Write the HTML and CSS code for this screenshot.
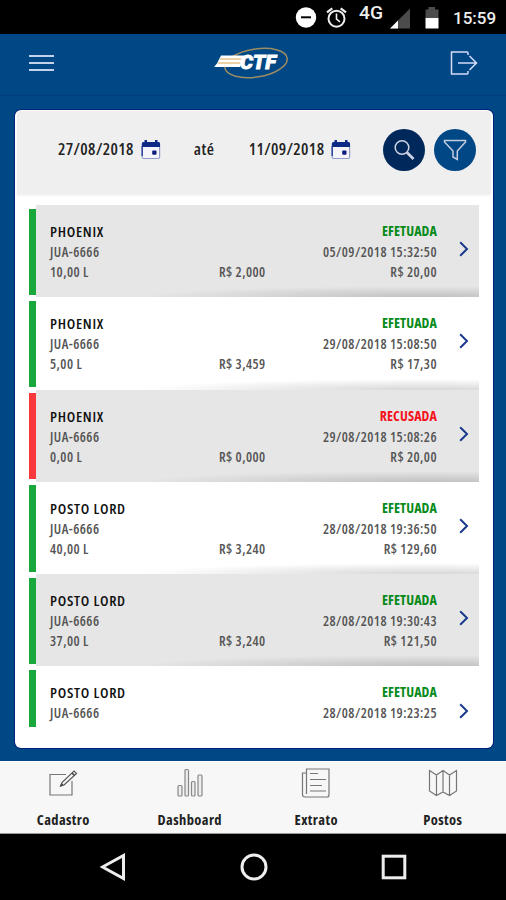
FILE: index.html
```html
<!DOCTYPE html>
<html lang="pt-BR">
<head>
	<meta charset="UTF-8">
	<meta name="viewport" content="width=device-width,user-scalable=no">
	<title>CTF</title>
	<link rel="stylesheet" href="styles.css">
</head>
<body>
	<svg class="defs" width="0" height="0">
		<symbol id="calendar" viewBox="0 0 20 20">
			<rect x="1.2" y="2.5" width="17.4" height="16" rx="1.5" fill="#f4f4fa" stroke="#8f9bc8" stroke-width="1.2"/>
			<path d="M1 7V3.5Q1 2 2.5 2H3.5V0H6V2H14V0H16.5V2H17.5Q19 2 19 3.5V7Z" fill="#0c2a86"/>
			<path d="M1.2 6V16" stroke="#22409a" stroke-width="1.4"/>
			<rect x="11.2" y="10.5" width="4.3" height="4.2" rx="1" fill="#0c1c7c"/>
		</symbol>
		<symbol id="arrow" viewBox="0 0 10 16">
			<path d="M1.2 1.2L8 8L1.2 14.8" fill="none" stroke="#1a3a8c" stroke-width="2"/>
		</symbol>
	</svg>

	<div class="status">
		<svg class="icons" width="142" height="34" viewBox="0 0 142 34">
			<circle cx="11" cy="17.5" r="10.2" fill="#fff"/>
			<path d="M6 17.3H16" stroke="#000" stroke-width="2"/>
			<g fill="none" stroke="#eee" stroke-width="2">
				<circle cx="41.5" cy="18.7" r="8"/>
				<path d="M41.5 13.5V19L45 21.8" stroke-width="1.6"/>
				<path d="M32 12.3L37.3 8.3M51 12.3L45.7 8.3" stroke-width="2.3"/>
			</g>
			<text class="net" x="64" y="18.5" textLength="24" lengthAdjust="spacingAndGlyphs">4G</text>
			<path d="M95 28.5L115 8.5V28.5Z" fill="#4c4c4c"/>
			<path d="M95 28.5L103 20.5V28.5Z" fill="#fff"/>
			<path d="M130.5 18V9.5H133.5V7H140V9.5H143.5V18Z" fill="#4c4c4c"/>
			<path d="M130.5 18H143.5V28.5H130.5Z" fill="#fff"/>
		</svg>
		<span class="clock">15:59</span>
	</div>

	<header class="top">
		<svg width="26" height="18" viewBox="0 0 26 18">
			<path d="M0 2H25M0 9H25M0 16H25" stroke="#c3d3ec" stroke-width="1.8"/>
		</svg>
		<svg class="logo" width="76" height="34" viewBox="0 0 76 34">
			<ellipse cx="42" cy="17" rx="31.5" ry="14" transform="rotate(-9 42 17)" fill="none" stroke="#9c8d62" stroke-width="1.5"/>
			<path d="M7 9.5H32L26 21H0L3 17.5Z" fill="#fff"/>
			<path d="M6 13H30M4 17H28" stroke="#d6a64a" stroke-width="1.2"/>
			<text class="brand" x="26" y="23" textLength="36" lengthAdjust="spacingAndGlyphs">CTF</text>
		</svg>
		<svg width="28" height="24" viewBox="0 0 28 24">
			<path d="M18 4V2Q18 1 17 1H1.5V23H17Q18 23 18 22V20M8 12H26M19.5 5L26.5 12L19.5 19" fill="none" stroke="#d5dcf6" stroke-width="1.5"/>
		</svg>
	</header>

	<main class="card">
		<div class="filter">
			<span class="date">27/08/2018</span>
			<svg class="cal" width="20" height="20"><use href="#calendar"/></svg>
			<span class="until">até</span>
			<span class="date">11/09/2018</span>
			<svg class="cal" width="20" height="20"><use href="#calendar"/></svg>
			<a class="btn search">
				<svg width="22" height="22" viewBox="0 0 22 22" fill="none" stroke="#cfd3e4">
					<circle cx="9" cy="8.5" r="6.8" stroke-width="1.5"/>
					<path d="M14 13.5L20.5 20" stroke-width="2.6"/>
				</svg>
			</a>
			<a class="btn">
				<svg width="24" height="22" viewBox="0 0 24 22">
					<path d="M1.5 1.5H22.5V3L14.3 12V20.5L10 18V12L1.5 3Z" fill="none" stroke="#c5cde0" stroke-width="1.5"/>
				</svg>
			</a>
		</div>

		<ul class="list">
			<li>
				<i class="bar"></i>
				<div class="row">
					<div class="left"><b>PHOENIX</b><span>JUA-6666</span><span>10,00 L</span></div>
					<span class="price">R$ 2,000</span>
					<div class="right"><b>EFETUADA</b><span>05/09/2018 15:32:50</span><span>R$ 20,00</span></div>
					<svg width="10" height="16"><use href="#arrow"/></svg>
				</div>
			</li>
			<li>
				<i class="bar"></i>
				<div class="row">
					<div class="left"><b>PHOENIX</b><span>JUA-6666</span><span>5,00 L</span></div>
					<span class="price">R$ 3,459</span>
					<div class="right"><b>EFETUADA</b><span>29/08/2018 15:08:50</span><span>R$ 17,30</span></div>
					<svg width="10" height="16"><use href="#arrow"/></svg>
				</div>
			</li>
			<li class="refused">
				<i class="bar"></i>
				<div class="row">
					<div class="left"><b>PHOENIX</b><span>JUA-6666</span><span>0,00 L</span></div>
					<span class="price">R$ 0,000</span>
					<div class="right"><b>RECUSADA</b><span>29/08/2018 15:08:26</span><span>R$ 20,00</span></div>
					<svg width="10" height="16"><use href="#arrow"/></svg>
				</div>
			</li>
			<li>
				<i class="bar"></i>
				<div class="row">
					<div class="left"><b>POSTO LORD</b><span>JUA-6666</span><span>40,00 L</span></div>
					<span class="price">R$ 3,240</span>
					<div class="right"><b>EFETUADA</b><span>28/08/2018 19:36:50</span><span>R$ 129,60</span></div>
					<svg width="10" height="16"><use href="#arrow"/></svg>
				</div>
			</li>
			<li>
				<i class="bar"></i>
				<div class="row">
					<div class="left"><b>POSTO LORD</b><span>JUA-6666</span><span>37,00 L</span></div>
					<span class="price">R$ 3,240</span>
					<div class="right"><b>EFETUADA</b><span>28/08/2018 19:30:43</span><span>R$ 121,50</span></div>
					<svg width="10" height="16"><use href="#arrow"/></svg>
				</div>
			</li>
			<li>
				<i class="bar"></i>
				<div class="row">
					<div class="left"><b>POSTO LORD</b><span>JUA-6666</span></div>
					<div class="right"><b>EFETUADA</b><span>28/08/2018 19:23:25</span></div>
					<svg width="10" height="16"><use href="#arrow"/></svg>
				</div>
			</li>
		</ul>
	</main>

	<nav class="tabs">
		<a>
			<svg width="30" height="30" viewBox="0 0 30 30" fill="none" stroke="#777" stroke-width="1.2">
				<path d="M18 6.5H2V27H24V13"/>
				<path d="M12.5 18L14 14.5L26 3L28.5 5.5L16 17Z" stroke="#555"/>
				<path d="M24 5L26.5 7.5M12.5 18L15 16" stroke="#444" stroke-width="1.6"/>
			</svg>
			<span>Cadastro</span>
		</a>
		<a>
			<svg width="30" height="30" viewBox="0 0 30 30" fill="#eee" stroke="#888" stroke-width="1.2">
				<rect x="3" y="17.5" width="4" height="10.5" rx="1"/>
				<rect x="10" y="1.5" width="3.5" height="26.5" rx="1"/>
				<rect x="16.5" y="13.5" width="3.5" height="14.5" rx="1"/>
				<rect x="23" y="7" width="4" height="21" rx="1"/>
			</svg>
			<span>Dashboard</span>
		</a>
		<a>
			<svg width="30" height="30" viewBox="0 0 30 30" fill="none" stroke="#777" stroke-width="1.2">
				<path d="M5.5 26V1H28V27Q28 29 26 29H4Q1.5 29 1.5 26.5V5H5.5"/>
				<path d="M9 5.5H17M9 11.5H25M9 17.5H21M9 23H25"/>
			</svg>
			<span>Extrato</span>
		</a>
		<a>
			<svg width="30" height="30" viewBox="0 0 30 30" fill="none" stroke="#777" stroke-width="1.2">
				<path d="M1.5 2.5L8.5 7L15 2.5L21.5 7L28.5 2.5V23L21.5 27.5L15 24L8.5 27.5L1.5 23ZM8.5 7V27.5M15 2.5V24M21.5 7V27.5"/>
			</svg>
			<span>Postos</span>
		</a>
	</nav>

	<footer class="keys">
		<svg width="26" height="28" viewBox="0 0 26 28"><path d="M2.5 14L23.5 2.5V25.5Z"/></svg>
		<svg width="28" height="28" viewBox="0 0 28 28"><circle cx="14" cy="14" r="12"/></svg>
		<svg width="26" height="26" viewBox="0 0 26 26"><rect x="2.2" y="2.2" width="21.6" height="21.6"/></svg>
	</footer>
</body>
</html>
```
FILE: styles.css
```css
* {
	box-sizing: border-box;
}

body {
	margin:0;
	width:506px;
	height:900px;
	overflow: hidden;
	background-color: #004785;
	font-family: "Open Sans", "Noto Sans", sans-serif;
	font-stretch: 75%;
	display:flex;
	flex-direction: column;
}

svg {
	display:block;
	flex:none;
}

.defs {
	display:none;
}

.status {
	height:34px;
	flex:none;
	background-color: #000;
	display:flex;
	justify-content: flex-end;
	align-items: center;
	padding-right:10px;
	font-family: Roboto, sans-serif;
	font-stretch: normal;
}

.status .icons {
	margin-right:16px;
	overflow: visible;
}

.net {
	fill:#eee;
	font-size:17.5px;
	font-weight:500;
}

.clock {
	width:43px;
	color:#eee;
	font-size:17px;
	font-weight:500;
	line-height:34px;
	padding-top:1px;
}

.top {
	height:62px;
	flex:none;
	border-bottom:1px solid #003d7d;
	display:flex;
	justify-content: space-between;
	align-items: flex-start;
	padding:20px 28px 0 29px;
}

.top .logo {
	margin:-8px 0 0 -2px;
}

.top svg:last-child {
	margin-top:-3px;
}

.brand {
	fill:#fff;
	stroke:#fff;
	stroke-width:.8px;
	font:italic 900 20px Roboto, sans-serif;
}

.card {
	width:478px;
	height:638px;
	flex:none;
	margin:14px 0 0 15px;
	padding:1px 2px;
	background-color: #fff;
	border-radius: 6px;
	box-shadow: 0 0 0 1px #00227a;
}

.filter {
	height:83px;
	background-color: #efefef;
	border-radius: 4px 4px 0 0;
	box-shadow: 0 2px 2px #f4f4f4;
	display:flex;
	align-items: center;
	padding:0 15px 6px 41px;
	font-size:16.5px;
	font-weight:600;
	color:#222;
}

.date {
	width:76px;
	letter-spacing: .4px;
	white-space: nowrap;
	margin-top:-2px;
}

.cal {
	margin-left:7px;
}

.until {
	width:22px;
	letter-spacing: .5px;
	margin:-2px 33px 0;
}

.btn {
	width:42px;
	height:42px;
	border-radius: 50%;
	background-color: #004786;
	display:flex;
	align-items: center;
	justify-content: center;
	margin-left:9px;
}

.search {
	background-color: #00285a;
	margin-left:32px;
}

.list {
	height:522px;
	margin:11px 12px 0 11.5px;
	padding:0;
	list-style:none;
	overflow: hidden;
}

.list li {
	height:92.3px;
	display:flex;
}

.bar {
	width:7.5px;
	margin:3.5px 0 2.5px;
	background-color: #1aa83c;
}

.list li:last-child .bar {
	margin-bottom:0;
}

.row {
	flex:1;
	display:flex;
	padding:15px 10px 0 14px;
	font-size:13.7px;
	font-weight:600;
	letter-spacing: .46px;
	line-height:20px;
	color:#555;
	background-image: radial-gradient(ellipse 65% 11px at 88% 100%, rgba(0,0,0,.16), transparent);
}

.list li:nth-child(odd) .row {
	background-color: #e6e6e6;
}

.list li:last-child .row {
	background-image: none;
}

.row b {
	display:block;
	font-size:15px;
	font-weight:600;
	letter-spacing: .7px;
	line-height:22px;
	color:#111;
}

.row span {
	display:block;
	white-space: nowrap;
}

.left {
	width:169px;
}

.row .price {
	margin-top:42px;
}

.right {
	flex:1;
	text-align: right;
}

.right b {
	font-size:14px;
	font-weight:700;
	letter-spacing: .1px;
	color:#068a18;
}

.row svg {
	margin:21.2px 0 0 22px;
}

.refused .bar {
	background-color: #f9383b;
}

.refused .right b {
	color:#f5121c;
}

.tabs {
	height:73px;
	flex:none;
	margin-top:13px;
	background-color: #f7f7f7;
	border-top:1px solid #fff;
	border-bottom:1px solid #999;
	display:flex;
}

.tabs a {
	flex:1;
	display:flex;
	flex-direction: column;
	align-items: center;
	padding-top:6px;
	font-size:14.5px;
	font-weight:700;
	letter-spacing: .4px;
	line-height:20px;
	color:#222;
}

.tabs span {
	margin-top:12px;
}

.keys {
	flex:1;
	background-color: #000;
	display:flex;
	align-items: center;
	justify-content: space-between;
	padding:0 99px 0 100px;
}

.keys svg {
	fill:none;
	stroke:#eee;
	stroke-width:3px;
}
```
